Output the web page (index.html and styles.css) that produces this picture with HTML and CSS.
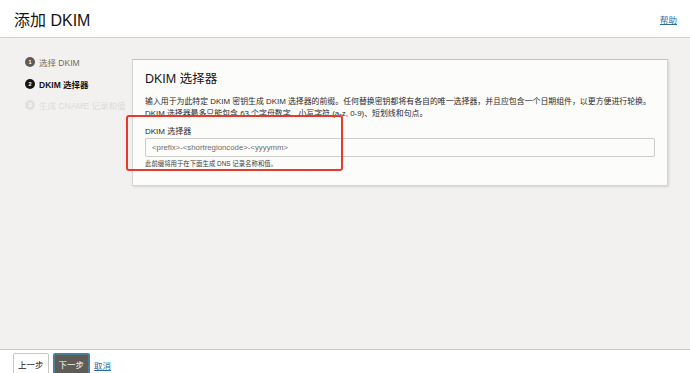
FILE: index.html
```html
<!DOCTYPE html>
<html lang="zh-CN">
<head>
  <meta charset="UTF-8">
  <meta name="viewport" content="width=device-width, initial-scale=1.0">
  <title>添加 DKIM</title>
  <link rel="stylesheet" href="styles.css">
</head>
<body>
  <div class="header">
    <h1>添加 DKIM</h1>
    <a href="#" class="help">帮助</a>
  </div>
  <div class="main">
    <ul class="steps">
      <li class="done"><span class="num">1</span> 选择 DKIM</li>
      <li class="current"><span class="num">2</span> DKIM 选择器</li>
      <li class="todo"><span class="num">3</span> 生成 CNAME 记录和值</li>
    </ul>
    <div class="panel">
      <h2>DKIM 选择器</h2>
      <p class="desc">输入用于为此特定 DKIM 密钥生成 DKIM 选择器的前缀。任何替换密钥都将有各自的唯一选择器，并且应包含一个日期组件，以更方便进行轮换。<br>DKIM 选择器最多只能包含 63 个字母数字、小写字符 (a-z, 0-9)、短划线和句点。</p>
      <label class="field-label">DKIM 选择器</label>
      <input type="text" class="field" placeholder="<prefix>-<shortregioncode>-<yyyymm>">
      <p class="hint">此前缀将用于在下面生成 DNS 记录名称和值。</p>
      <div class="mark"></div>
    </div>
  </div>
  <div class="footer">
    <button class="btn">上一步</button>
    <button class="btn primary">下一步</button>
    <a href="#" class="cancel">取消</a>
  </div>
</body>
</html>
```

FILE: styles.css
```css
body {
  margin: 0;
  font-family: "Liberation Sans", "Noto Sans CJK SC", sans-serif;
  color: #161513;
  background-color: #fff;
}

.header {
  height: 37px;
  padding: 0 13px 0 14px;
  display: flex;
  align-items: center;
  justify-content: space-between;
  border-bottom: 1px solid #d4d2cf;
}

h1 {
  margin: 0;
  font-size: 16px;
  font-weight: normal;
}

.help {
  font-size: 8.5px;
  color: #2a6a9e;
}

.main {
  height: 312px;
  background-color: #f2f1f0;
  display: flex;
  align-items: flex-start;
  padding-top: 21px;
  box-sizing: border-box;
  border-bottom: 1px solid #c9c7c4;
}

.steps {
  list-style-type: none;
  margin: -2px 0 0 0;
  padding: 0 0 0 25px;
  width: 107px;
  flex-shrink: 0;
}

.steps li {
  display: flex;
  align-items: center;
  gap: 4px;
  height: 10px;
  margin-bottom: 11.5px;
  font-size: 8.5px;
  white-space: nowrap;
}

.num {
  width: 10px;
  height: 10px;
  border-radius: 50%;
  color: #fff;
  font-size: 5.5px;
  font-weight: bold;
  display: flex;
  align-items: center;
  justify-content: center;
}

.done { color: #6f6c68; }
.done .num { background-color: #5f5b57; }
.current { color: #161513; font-weight: bold; }
.current .num { background-color: #161513; }
.todo { color: #dddbd8; }
.todo .num { background-color: #e2e0dd; }

.panel {
  position: relative;
  width: 536px;
  height: 127px;
  box-sizing: border-box;
  padding: 11px 12px 0 12px;
  background-color: #fcfcfb;
  border: 1px solid #d6d4d1;
  border-top-color: #c4c2bf;
  box-shadow: 1px 1px 2px rgba(0, 0, 0, 0.12);
}

h2 {
  margin: 0 0 9px 0;
  font-size: 12.5px;
  font-weight: normal;
  line-height: 16px;
}

.desc {
  margin: 0 0 6px 0;
  font-size: 7.9px;
  line-height: 12px;
  color: #2b2a28;
}

.field-label {
  display: block;
  font-size: 8px;
  line-height: 11px;
  color: #2b2a28;
  margin-bottom: 1px;
}

.field {
  display: block;
  width: 100%;
  height: 19px;
  box-sizing: border-box;
  margin: 0;
  padding: 0 6px;
  font-family: inherit;
  font-size: 7.8px;
  border: 1px solid #cfcdca;
  border-radius: 2px;
  background-color: #fcfcfb;
}

.field::placeholder {
  color: #6f6c68;
}

.hint {
  margin: 2px 0 0 0;
  font-size: 6.4px;
  line-height: 9px;
  color: #3f3d3a;
}

.mark {
  position: absolute;
  left: -7px;
  top: 55px;
  width: 213px;
  height: 52px;
  border: 2px solid #e8392c;
  border-radius: 3px;
}

.footer {
  padding: 3px 13px;
  display: flex;
  align-items: flex-start;
  gap: 4px;
}

.btn {
  height: 22px;
  margin: 0;
  padding: 0 4px;
  font-family: inherit;
  font-size: 8.5px;
  color: #161513;
  background-color: #fff;
  border: 1px solid #c9c7c4;
  border-radius: 2px;
}

.btn.primary {
  color: #fff;
  background-color: #5f5b57;
  border: 2px solid #4b7f96;
}

.cancel {
  margin-top: 6px;
  font-size: 8.5px;
  color: #2a6a9e;
}
```
